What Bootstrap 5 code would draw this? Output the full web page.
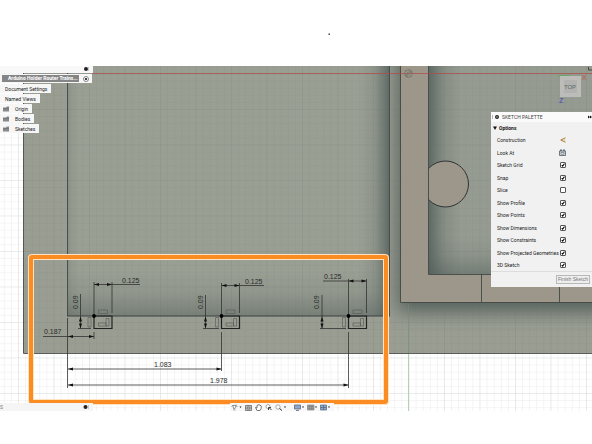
<!DOCTYPE html>
<html lang="en">
<head>
<meta charset="utf-8">
<meta name="viewport" content="width=device-width, initial-scale=1">
<title>Arduino Holder Router Training</title>
<link href="https://cdn.jsdelivr.net/npm/bootstrap@5.3.0/dist/css/bootstrap.min.css" rel="stylesheet">
<style>
body{font-family:Roboto,"Liberation Sans",sans-serif;font-size:5px;line-height:8px;color:#222;background:#fff}
.top-space{height:66px}
.drawing{width:100%;height:auto}
.drawing text{font-family:"Liberation Sans",Arial,sans-serif}
.browser-pane{gap:1px}
.browser-head{width:93px;height:7px;background:#f8f8f8;padding-right:4px}
.tree-item{height:9px;background:#f6f6f6;padding:0 4px 0 5px;gap:6px}
.tree-doc{width:92px;gap:4px;padding:0 3px 0 2px}
.doc-name{background:#858585;color:#fff;height:7px;line-height:7px;padding-left:6px;font-weight:bold}
.tree-folder{padding-left:3px}
.palette{top:46px;width:101px;background:#f1f1f1}
.palette-head{height:10px;background:#fafafa;color:#444;gap:3px;padding-left:1px}
.palette-group{height:12px;gap:2px;padding-left:2px;color:#111;font-weight:bold}
.palette-rows{min-height:137px;padding:0 26px 0 6px}
.palette-row{height:12px}
.palette-foot{height:16px;border-top:1px solid #ddd;padding-right:2px}
.tool-btn{background:none;border:0;padding:0;line-height:0}
.finish-btn{font-family:"Liberation Sans",Arial,sans-serif;font-size:5px;line-height:7px;border:1px solid #b8b8b8;color:#777;background:#eee;padding:0 1px;border-radius:0}
.palette-row .form-check-input{width:6px;height:6px;margin:0;border:1px solid #555;border-radius:1px;background-color:#fff}
.palette-row .form-check-input:checked{background-color:#fff;background-image:url("data:image/svg+xml,%3Csvg xmlns='http://www.w3.org/2000/svg' viewBox='0 0 6 6'%3E%3Cpath d='M1 3.2 2.5 4.7 5.2 1' fill='none' stroke='%23111' stroke-width='1.6'/%3E%3C/svg%3E")}
.comments{width:93px;height:8px;background:#f5f5f5;padding-right:4px;color:#777}
.nav-tools{height:8px;margin-left:137px;background:#f7f7f7;gap:3px;padding:0 4px 0 1px}
.finish-btn,.dock-text{white-space:nowrap}
</style>
<script src="https://cdn.jsdelivr.net/npm/bootstrap@5.3.0/dist/js/bootstrap.bundle.min.js"></script>
</head>
<body class="overflow-hidden">
<header class="top-space">
<svg class="d-block w-100" height="66" viewBox="0 0 592 66" aria-hidden="true"><rect x="328.500" y="33.500" width="1.500" height="1.500" fill="#444"/></svg>
</header>
<main class="position-relative overflow-hidden">
<svg class="drawing d-block" viewBox="0 66 592 345" role="img" aria-label="Sketch with dimensions">
<defs>
<pattern id="gridMinor" x="408.500" y="73.500" width="7.100" height="7.100" patternUnits="userSpaceOnUse"><path d="M0 0H7.100M0 0V7.100" fill="none" stroke="#5f6966" stroke-opacity=".14" stroke-width="1"/></pattern>
<pattern id="gridMajor" x="408.500" y="73.500" width="35.500" height="35.500" patternUnits="userSpaceOnUse"><path d="M0 0H35.500M0 0V35.500" fill="none" stroke="#5f6966" stroke-opacity=".15" stroke-width="1"/></pattern>
<linearGradient id="shadeRight"><stop offset="0" stop-color="#4b5855" stop-opacity="0"/><stop offset=".5" stop-color="#4b5855" stop-opacity=".16"/><stop offset="1" stop-color="#465350" stop-opacity=".7"/></linearGradient>
<linearGradient id="shadeLeft" x1="1" x2="0"><stop offset="0" stop-color="#4b5855" stop-opacity="0"/><stop offset=".5" stop-color="#4b5855" stop-opacity=".2"/><stop offset="1" stop-color="#465350" stop-opacity=".7"/></linearGradient>
<linearGradient id="shadeDown" x1="0" x2="0" y1="0" y2="1"><stop offset="0" stop-color="#4b5855" stop-opacity="0"/><stop offset=".5" stop-color="#4b5855" stop-opacity=".12"/><stop offset="1" stop-color="#4b5855" stop-opacity=".45"/></linearGradient>
<filter id="soft" x="-20%" y="-20%" width="140%" height="140%"><feGaussianBlur stdDeviation="9"/></filter>
<clipPath id="plateClip"><path d="M390 66H592V353H390Z"/></clipPath>
<clipPath id="pocketClip"><path d="M428.500 66H592V274H428.500Z"/></clipPath>
<path id="arrL" d="M0 0 5-1.500V1.500Z"/><path id="arrR" d="M0 0-5-1.500V1.500Z"/>
<path id="arrU" d="M0 0-1.500 5H1.500Z"/><path id="arrD" d="M0 0-1.500-5H1.500Z"/>
<g id="slot">
<path d="M0 0H18V12.500H0Z" fill="none" stroke="#222" stroke-width="1.200"/>
<circle r="1.900" fill="#000"/>
<g fill="none" stroke="#555" stroke-width=".6"><path d="M4.500-6H13.500V-2.500H4.500ZM-6 1.500H-3V11H-6ZM4.500 7H12V10H4.500ZM12 2.500H15V10H12Z"/></g>
</g>
</defs>
<rect y="66" width="592" height="345" fill="#fff"/>
<path d="M23.500 66H592V353H23.500Z" fill="#999d92"/>
<path d="M67.500 66H389.500V316H67.500Z" fill="#9a9f94"/>
<path d="M67.500 66H79V316H67.500Z" fill="url(#shadeLeft)" opacity=".28"/>
<path d="M359 66H389.500V316H359Z" fill="url(#shadeRight)"/>
<path d="M67.500 270H389.500V316H67.500Z" fill="url(#shadeDown)"/>
<g clip-path="url(#plateClip)"><path d="M398 40H640V312H398Z" fill="#3f4e4b" opacity=".75" filter="url(#soft)"/></g>
<path d="M400.500 66H592V302.500H400.500Z" fill="#9c978a"/>
<g clip-path="url(#pocketClip)"><path d="M428.500 66H592V274H428.500Z" fill="#959b91"/><path d="M428.500 66H461V274H428.500Z" fill="url(#shadeLeft)"/><path d="M428.500 236H592V274H428.500Z" fill="url(#shadeDown)"/></g>
<rect y="66" width="592" height="345" fill="url(#gridMinor)"/>
<rect y="66" width="592" height="345" fill="url(#gridMajor)"/>
<path d="M401 66H428.500V274H592V302H401Z" fill="#9c978a" opacity=".9"/>
<g clip-path="url(#pocketClip)"><circle cx="445.500" cy="184" r="23" fill="#9c978a" stroke="#303533" stroke-width="1"/></g>
<path d="M23.500 66V353.500H592M67.500 66V316M389.500 66V316M400.500 66V302.500H592M428.500 66V274.500H592M481.500 274V302M559.500 274V302" fill="none" stroke="#3d4341" stroke-opacity=".85"/>
<path d="M67 316H390" stroke="#3d4341"/>
<path d="M92 73.500H592" stroke="#b04a44" stroke-opacity=".7"/>
<path d="M408.500 304V353" stroke="#71906d" stroke-opacity=".5"/><path d="M408.500 354V411" stroke="#b4d2b3"/>
<g fill="none" stroke="#777467" stroke-width=".7"><circle cx="408.500" cy="73.500" r="4"/><path d="M405.500 70.500 411.500 76.500"/></g><path d="M408.500 73.500V69.500A4 4 0 0 1 412.500 73.500ZM408.500 73.500V77.500A4 4 0 0 1 404.500 73.500Z" fill="#777467" opacity=".6"/>
<g stroke="#333" stroke-width=".8" fill="none">
<path d="M94 282V316M112 282V313M94 284.500H140M80.500 294V328.500M78 328.500H91M43 336.500H94M94 332V339M67.500 318V388"/>
<path d="M221.500 283V316M239.500 283V313M221.500 285.500H264M205.500 295V328.500M203 328.500H219M221.500 332V371"/>
<path d="M348.500 279V316M366.500 279V313M323 281H366.500M322 295V328.500M320 328.500H346M348.500 332V388"/>
<path d="M68 369H221.500M68 385H348.500"/>
</g>
<g fill="#111">
<use href="#arrL" x="94" y="284.500"/><use href="#arrR" x="112" y="284.500"/><use href="#arrL" x="221.500" y="285.500"/><use href="#arrR" x="239.500" y="285.500"/><use href="#arrL" x="348.500" y="281"/><use href="#arrR" x="366.500" y="281"/>
<use href="#arrU" x="80.500" y="316.500"/><use href="#arrD" x="80.500" y="328.500"/><use href="#arrU" x="205.500" y="316.500"/><use href="#arrD" x="205.500" y="328.500"/><use href="#arrU" x="322" y="316.500"/><use href="#arrD" x="322" y="328.500"/>
<use href="#arrL" x="68" y="336.500"/><use href="#arrR" x="94" y="336.500"/><use href="#arrL" x="68" y="369"/><use href="#arrR" x="221.500" y="369"/><use href="#arrL" x="68" y="385"/><use href="#arrR" x="348.500" y="385"/>
</g>
<use href="#slot" x="94" y="316"/><use href="#slot" x="221.500" y="316"/><use href="#slot" x="348.500" y="316"/>
<g font-size="7" fill="#2a2a2a">
<text x="122" y="283">0.125</text><text x="245" y="284">0.125</text><text x="324" y="279">0.125</text>
<text x="44" y="334">0.187</text><text x="154" y="367">1.083</text><text x="210" y="383">1.978</text>
<text transform="translate(78 309) rotate(-90)">0.09</text><text transform="translate(203 309) rotate(-90)">0.09</text><text transform="translate(319 309) rotate(-90)">0.09</text>
</g>
<g><path d="M558 75.500H570" stroke="#66a866"/><path d="M560 76H581V97H560Z" fill="#bcbcb8"/><path d="M564 80H577V93H564Z" fill="#b2b3b0"/><text x="570" y="89" text-anchor="middle" font-size="6" fill="#60666a">TOP</text><text x="582" y="80" font-size="7" fill="#c0504a">X</text><text x="559" y="103" font-size="7" fill="#4848c0">Z</text><path d="M588.500 67V70H592" stroke="#444" fill="none"/></g>
<rect x="31" y="257" width="355" height="145" rx="1" fill="none" stroke="#ffe3c0" stroke-width="6"/>
<rect x="31" y="257" width="355" height="145" rx="1" fill="none" stroke="#fb8c23" stroke-width="4"/>
</svg>

<nav class="browser-pane position-absolute top-0 start-0 d-flex flex-column align-items-start" aria-label="Browser">
<div class="browser-head d-flex justify-content-end align-items-center"><svg width="6" height="6" viewBox="0 0 6 6"><circle cx="3" cy="2" r="2" fill="#222"/><path d="M5.700 0V4" stroke="#999" stroke-width=".6"/></svg></div>
<div class="tree-item tree-doc d-flex align-items-center"><span class="doc-name flex-grow-1 dock-text">Arduino Holder Router Trains...</span><svg width="6" height="6" viewBox="0 0 6 6"><circle cx="3" cy="3" r="2.500" fill="#fff" stroke="#555" stroke-width=".7"/><circle cx="3" cy="3" r="1.100" fill="#111"/></svg></div>
<div class="tree-item d-flex align-items-center">Document Settings</div>
<div class="tree-item d-flex align-items-center">Named Views</div>
<div class="tree-item tree-folder d-flex align-items-center"><svg width="6" height="6" viewBox="0 0 6 6"><path d="M0 1.500H3L4 .5H6V5.500H0Z" fill="#888"/><path d="M0 2.500H6" stroke="#666" stroke-width=".5"/></svg>Origin</div>
<div class="tree-item tree-folder d-flex align-items-center"><svg width="6" height="6" viewBox="0 0 6 6"><path d="M0 1.500H3L4 .5H6V5.500H0Z" fill="#888"/><path d="M0 2.500H6" stroke="#666" stroke-width=".5"/></svg>Bodies</div>
<div class="tree-item tree-folder d-flex align-items-center"><svg width="6" height="6" viewBox="0 0 6 6"><path d="M0 1.500H3L4 .5H6V5.500H0Z" fill="#888"/><path d="M0 2.500H6" stroke="#666" stroke-width=".5"/></svg>Sketches</div>
</nav>

<form class="palette position-absolute end-0">
<div class="palette-head d-flex align-items-center"><svg width="7" height="6" viewBox="0 0 7 6"><path d="M.5 1V5" stroke="#888" stroke-width=".6"/><circle cx="5" cy="3" r="2" fill="#222"/><path d="M4 3H6" stroke="#fff" stroke-width=".6"/></svg><span>SKETCH PALETTE</span><svg class="ms-auto" width="4" height="4" viewBox="0 0 4 4"><path d="M0 .5 2 2 0 3.500ZM2 .5 4 2 2 3.500Z" fill="#111"/></svg></div>
<div class="palette-group d-flex align-items-center"><svg width="4" height="4" viewBox="0 0 4 4"><path d="M0 .5H4L2 4Z" fill="#111"/></svg>Options</div>
<div class="palette-rows d-flex flex-column justify-content-between">
<div class="palette-row d-flex align-items-center justify-content-between"><span>Construction</span><button type="button" class="tool-btn" aria-label="Construction"><svg width="6" height="6" viewBox="0 0 6 6"><path d="M5.500.8.8 3 5.500 5.200" fill="none" stroke="#a87a28" stroke-width="1"/><path d="M4.500 1.500V4.500" stroke="#c5a568" stroke-width=".6" stroke-dasharray="1 .6"/></svg></button></div>
<div class="palette-row d-flex align-items-center justify-content-between"><span>Look At</span><button type="button" class="tool-btn" aria-label="Look At"><svg width="7" height="7" viewBox="0 0 7 7"><path d="M.5 2H6.500V6.500H.5ZM1.500 2V.8H2.500V2M4.500 2V.8H5.500V2" fill="#d5d9df" stroke="#555d68" stroke-width=".8"/><path d="M2 3.500H5V5.200H2Z" fill="#fff" stroke="#555d68" stroke-width=".6"/></svg></button></div>
<div class="palette-row d-flex align-items-center justify-content-between"><label for="c1">Sketch Grid</label><input class="form-check-input" type="checkbox" id="c1" checked></div>
<div class="palette-row d-flex align-items-center justify-content-between"><label for="c2">Snap</label><input class="form-check-input" type="checkbox" id="c2" checked></div>
<div class="palette-row d-flex align-items-center justify-content-between"><label for="c3">Slice</label><input class="form-check-input" type="checkbox" id="c3"></div>
<div class="palette-row d-flex align-items-center justify-content-between"><label for="c4">Show Profile</label><input class="form-check-input" type="checkbox" id="c4" checked></div>
<div class="palette-row d-flex align-items-center justify-content-between"><label for="c5">Show Points</label><input class="form-check-input" type="checkbox" id="c5" checked></div>
<div class="palette-row d-flex align-items-center justify-content-between"><label for="c6">Show Dimensions</label><input class="form-check-input" type="checkbox" id="c6" checked></div>
<div class="palette-row d-flex align-items-center justify-content-between"><label for="c7">Show Constraints</label><input class="form-check-input" type="checkbox" id="c7" checked></div>
<div class="palette-row d-flex align-items-center justify-content-between"><label class="dock-text" for="c8">Show Projected Geometries</label><input class="form-check-input" type="checkbox" id="c8" checked></div>
<div class="palette-row d-flex align-items-center justify-content-between"><label for="c9">3D Sketch</label><input class="form-check-input" type="checkbox" id="c9" checked></div>
</div>
<div class="palette-foot d-flex align-items-center justify-content-end"><button type="button" class="finish-btn">Finish Sketch</button></div>
</form>

<footer class="position-absolute bottom-0 start-0 d-flex align-items-end">
<div class="comments d-flex align-items-center justify-content-between"><span>S</span><svg width="6" height="6" viewBox="0 0 6 6"><circle cx="2.500" cy="3" r="2" fill="#222"/><path d="M5.700 1V5" stroke="#999" stroke-width=".6"/></svg></div>
<div class="nav-tools d-flex align-items-center" role="toolbar" aria-label="Navigation">
<button type="button" class="tool-btn" aria-label="Orbit"><svg width="11" height="7" viewBox="0 0 11 7"><path d="M.5 2.500C2 1 4 1 6.500 2.500M2 1C2 3 2.500 5 4 6.500M5 .5C5 3 4 5 2.500 6" fill="none" stroke="#777" stroke-width=".8"/><path d="M8.500 2.500H10.500L9.500 4Z" fill="#111"/></svg></button>
<button type="button" class="tool-btn" aria-label="Look at"><svg width="7" height="7" viewBox="0 0 7 7"><path d="M.5 1.500H6.500V6.500H.5ZM2 3H5V5H2Z" fill="#ccc" stroke="#666" stroke-width=".8"/></svg></button>
<button type="button" class="tool-btn" aria-label="Pan"><svg width="7" height="7" viewBox="0 0 7 7"><path d="M2 6.500.5 3.500 2 4V1.500L3 1 4 .8 5 1.200 6.200 2V4.500L5 6.500Z" fill="#fff" stroke="#555" stroke-width=".8"/></svg></button>
<button type="button" class="tool-btn" aria-label="Zoom"><svg width="7" height="7" viewBox="0 0 7 7"><circle cx="3" cy="2.500" r="2" fill="#fff" stroke="#888" stroke-width=".7"/><path d="M4.500 4 6.500 6M3.500 6V3.500H6" stroke="#333" stroke-width=".9" fill="none"/></svg></button>
<button type="button" class="tool-btn" aria-label="Zoom window"><svg width="12" height="7" viewBox="0 0 12 7"><circle cx="3" cy="3" r="2.200" fill="#fff" stroke="#888" stroke-width=".7"/><path d="M4.500 4.500 7 6.500" stroke="#333"/><path d="M9 2.500H11L10 4Z" fill="#111"/></svg></button>
<button type="button" class="tool-btn ms-1" aria-label="Display"><svg width="10" height="7" viewBox="0 0 10 7"><path d="M.5 1H6.500V5H.5ZM2 6.500H5" fill="#8aa9d0" stroke="#667" stroke-width=".8"/><path d="M8 2.500H10L9 4Z" fill="#111"/></svg></button>
<button type="button" class="tool-btn" aria-label="Grid"><svg width="10" height="7" viewBox="0 0 10 7"><path d="M.5 1H7V6H.5ZM.5 2.600H7M.5 4.300H7M2.600 1V6M4.800 1V6" fill="#aaa" stroke="#777" stroke-width=".6"/><path d="M8 2.500H10L9 4Z" fill="#111"/></svg></button>
<button type="button" class="tool-btn" aria-label="Viewports"><svg width="10" height="7" viewBox="0 0 10 7"><path d="M.5 1H6.500V6H.5ZM3.500 1V6M.5 3.500H6.500" fill="#8aa9d0" stroke="#567" stroke-width=".7"/><path d="M8 2.500H10L9 4Z" fill="#111"/></svg></button>
</div>
</footer>
</main>
</body>
</html>
